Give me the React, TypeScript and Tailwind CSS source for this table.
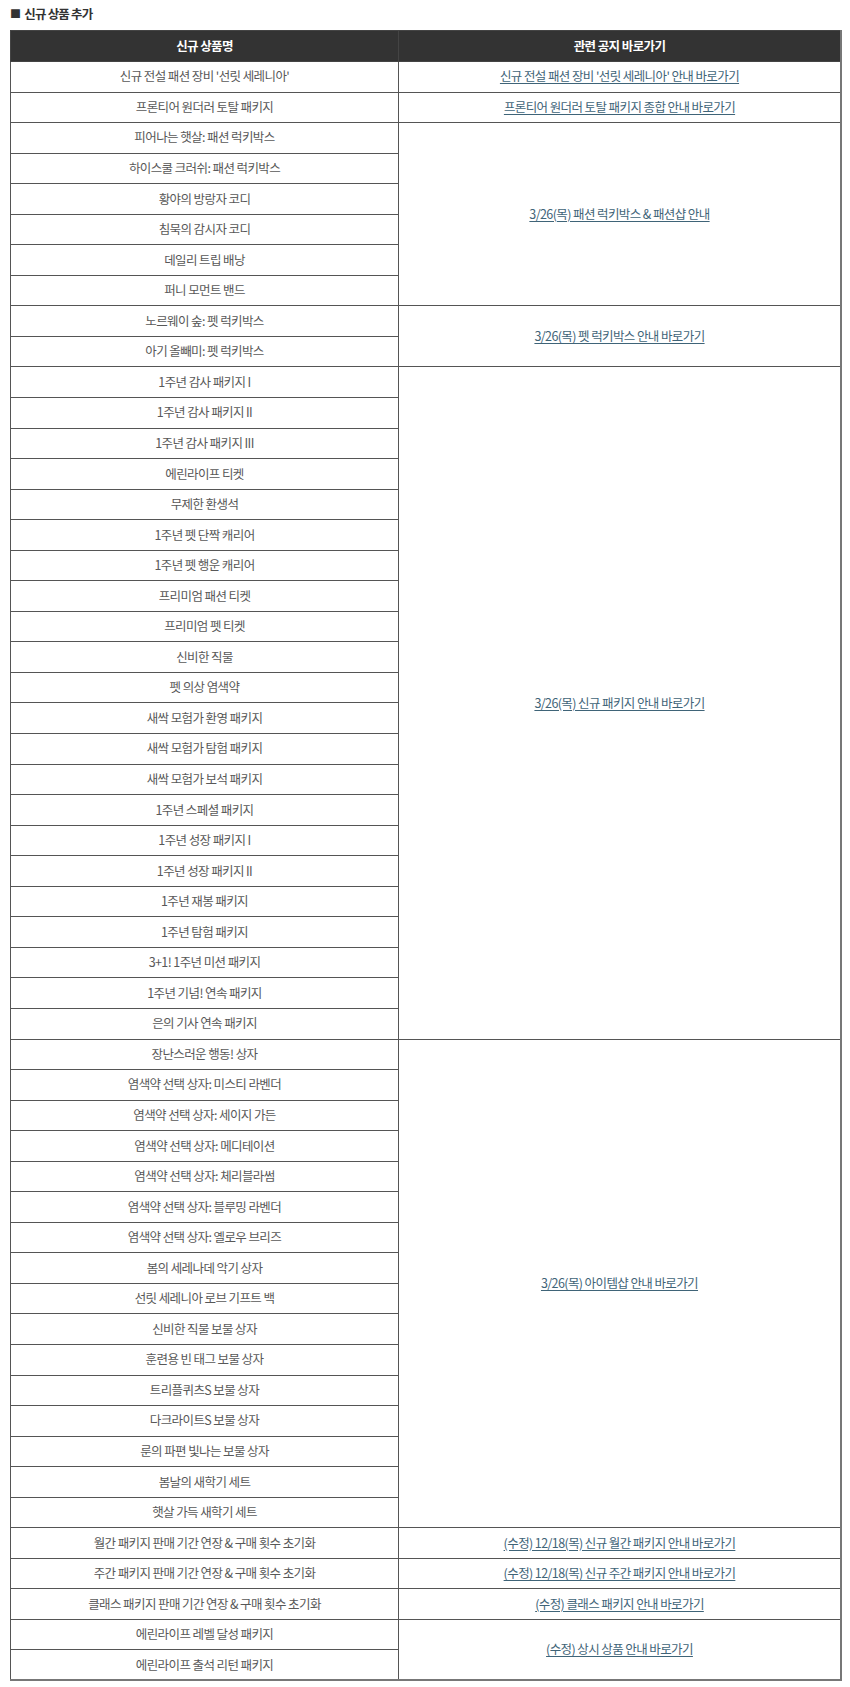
const groups: { items: string[]; link: string }[] = [
  { items: ["신규 전설 패션 장비 '선릿 세레니아'"], link: "신규 전설 패션 장비 '선릿 세레니아' 안내 바로가기" },
  { items: ["프론티어 원더러 토탈 패키지"], link: "프론티어 원더러 토탈 패키지 종합 안내 바로가기" },
  {
    items: [
      "피어나는 햇살: 패션 럭키박스",
      "하이스쿨 크러쉬: 패션 럭키박스",
      "황야의 방랑자 코디",
      "침묵의 감시자 코디",
      "데일리 트립 배낭",
      "퍼니 모먼트 밴드",
    ],
    link: "3/26(목) 패션 럭키박스 & 패션샵 안내",
  },
  { items: ["노르웨이 숲: 펫 럭키박스", "아기 올빼미: 펫 럭키박스"], link: "3/26(목) 펫 럭키박스 안내 바로가기" },
  {
    items: [
      "1주년 감사 패키지 I",
      "1주년 감사 패키지 II",
      "1주년 감사 패키지 III",
      "에린라이프 티켓",
      "무제한 환생석",
      "1주년 펫 단짝 캐리어",
      "1주년 펫 행운 캐리어",
      "프리미엄 패션 티켓",
      "프리미엄 펫 티켓",
      "신비한 직물",
      "펫 의상 염색약",
      "새싹 모험가 환영 패키지",
      "새싹 모험가 탐험 패키지",
      "새싹 모험가 보석 패키지",
      "1주년 스페셜 패키지",
      "1주년 성장 패키지 I",
      "1주년 성장 패키지 II",
      "1주년 재봉 패키지",
      "1주년 탐험 패키지",
      "3+1! 1주년 미션 패키지",
      "1주년 기념! 연속 패키지",
      "은의 기사 연속 패키지",
    ],
    link: "3/26(목) 신규 패키지 안내 바로가기",
  },
  {
    items: [
      "장난스러운 행동! 상자",
      "염색약 선택 상자: 미스티 라벤더",
      "염색약 선택 상자: 세이지 가든",
      "염색약 선택 상자: 메디테이션",
      "염색약 선택 상자: 체리블라썸",
      "염색약 선택 상자: 블루밍 라벤더",
      "염색약 선택 상자: 옐로우 브리즈",
      "봄의 세레나데 악기 상자",
      "선릿 세레니아 로브 기프트 백",
      "신비한 직물 보물 상자",
      "훈련용 빈 태그 보물 상자",
      "트리플퀴츠S 보물 상자",
      "다크라이트S 보물 상자",
      "룬의 파편 빛나는 보물 상자",
      "봄날의 새학기 세트",
      "햇살 가득 새학기 세트",
    ],
    link: "3/26(목) 아이템샵 안내 바로가기",
  },
  { items: ["월간 패키지 판매 기간 연장 & 구매 횟수 초기화"], link: "(수정) 12/18(목) 신규 월간 패키지 안내 바로가기" },
  { items: ["주간 패키지 판매 기간 연장 & 구매 횟수 초기화"], link: "(수정) 12/18(목) 신규 주간 패키지 안내 바로가기" },
  { items: ["클래스 패키지 판매 기간 연장 & 구매 횟수 초기화"], link: "(수정) 클래스 패키지 안내 바로가기" },
  { items: ["에린라이프 레벨 달성 패키지", "에린라이프 출석 리턴 패키지"], link: "(수정) 상시 상품 안내 바로가기" },
];

const font = { fontFamily: '"Noto Sans CJK KR", "Noto Sans", sans-serif' };

export default function App() {
  return (
    <div className="min-h-screen bg-white px-[10px] pt-[5px]" style={font}>
      <h2 className="flex items-center gap-[4px] text-[12.5px] font-bold leading-[17px] tracking-[-0.8px] text-[#333]">
        <span className="text-[11px]">■</span>
        신규 상품 추가
      </h2>
      <table className="mt-[8px] w-[832px] table-fixed border-collapse border-r-2 border-b-2 border-[#777] text-[12.5px] tracking-[-0.6px]">
        <colgroup>
          <col className="w-[388px]" />
          <col />
        </colgroup>
        <thead>
          <tr className="h-[31px] bg-[#333] text-white">
            <th className="border border-[#444] font-bold">신규 상품명</th>
            <th className="border border-[#444] font-bold">관련 공지 바로가기</th>
          </tr>
        </thead>
        <tbody>
          {groups.map((g) =>
            g.items.map((item, i) => (
              <tr key={item} className="h-[30.55px]">
                <td className="border border-[#555] p-0 text-center text-[#585858]">{item}</td>
                {i === 0 && (
                  <td rowSpan={g.items.length} className="border border-[#555] p-0 text-center">
                    <a href="#" className="text-[#3f6478] underline underline-offset-[2px]">
                      {g.link}
                    </a>
                  </td>
                )}
              </tr>
            ))
          )}
        </tbody>
      </table>
    </div>
  );
}
